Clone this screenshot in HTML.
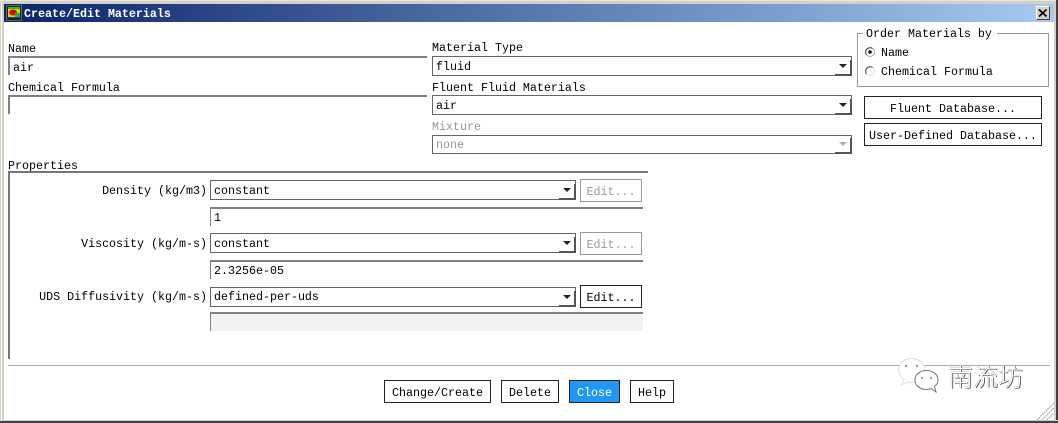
<!DOCTYPE html>
<html><head><meta charset="utf-8"><style>
html,body{margin:0;padding:0;background:#fff}
#w{position:relative;width:1058px;height:423px;overflow:hidden;background:#fff;font:11.67px/14px "Liberation Mono","Noto Sans CJK SC",monospace;color:#000}
#w div,#w svg{position:absolute;box-sizing:border-box}
.t{white-space:pre}
.f{border-top:2px solid #808080;border-left:2px solid #808080}
.s{border:1px solid #666;background:#fff;padding-left:3px;line-height:19px;white-space:pre}
.n{border-right:2px solid #555;border-bottom:2px solid #555;width:17px;height:16px}
.a{width:0;height:0;border-left:4px solid transparent;border-right:4px solid transparent;border-top:4px solid #222}
.b{border:1px solid #222;background:#fff;text-align:center;line-height:24px;white-space:pre}
.g{color:#999;border-color:#999}
</style></head><body><div id="w">
<!-- window frame -->
<div style="left:0;top:0;width:1058px;height:4px;background:#d4d0c8"></div>
<div style="left:0;top:0;width:4px;height:423px;background:#d4d0c8"></div>
<div style="left:1054px;top:0;width:2px;height:423px;background:#d4d0c8"></div>
<div style="left:1056px;top:0;width:2px;height:423px;background:#404040"></div>
<div style="left:0;top:420px;width:1058px;height:1px;background:#d4d0c8"></div>
<div style="left:0;top:421px;width:1058px;height:2px;background:#404040"></div>
<div style="left:0;top:0;width:1056px;height:1px;background:#e8e6e0"></div>
<div style="left:1px;top:1px;width:1px;height:420px;background:#fff"></div>
<!-- title -->
<div style="left:4px;top:4px;width:1050px;height:18px;background:linear-gradient(90deg,#0a246a,#a6caf0)"></div>
<svg style="left:6px;top:5px" width="16" height="16" viewBox="0 0 16 16"><rect width="16" height="16" fill="#666"/><rect x="1" y="1" width="14" height="14" fill="#222"/><rect x="2" y="2" width="12" height="11" fill="#e8d000"/><rect x="2" y="2" width="12" height="2" fill="#20c020"/><ellipse cx="7" cy="7.500" rx="4" ry="3" fill="#d01010"/><rect x="9" y="8" width="5" height="4" fill="#10c030"/><rect x="2" y="12" width="12" height="1" fill="#1040c0"/></svg>
<div class="t" style="left:24px;top:7px;color:#fff;font-weight:bold">Create/Edit Materials</div>
<div style="left:1036px;top:6px;width:14px;height:14px;background:#d4d0c8;border:1px solid;border-color:#fff #404040 #404040 #fff"></div>
<svg style="left:1038px;top:8px" width="10" height="10" viewBox="0 0 10 10"><path d="M1 1.500L8.500 8.500M8.500 1.500L1 8.500" stroke="#000" stroke-width="1.700" fill="none"/></svg>
<!-- left -->
<div class="t" style="left:8px;top:42px">Name</div>
<div class="f" style="left:8px;top:56px;width:419px;height:19px"></div>
<div class="t" style="left:13px;top:61px">air</div>
<div class="t" style="left:8px;top:81px">Chemical Formula</div>
<div class="f" style="left:8px;top:95px;width:419px;height:19px"></div>
<!-- middle -->
<div class="t" style="left:432px;top:41px">Material Type</div>
<div class="s" style="left:432px;top:56px;width:420px;height:20px;line-height:21px">fluid</div>
<div class="n" style="left:835px;top:60px"></div>
<div class="a" style="left:839px;top:64px"></div>
<div class="t" style="left:432px;top:81px">Fluent Fluid Materials</div>
<div class="s" style="left:432px;top:95px;width:420px;height:20px;line-height:21px">air</div>
<div class="n" style="left:835px;top:99px"></div>
<div class="a" style="left:839px;top:103px"></div>
<div class="t" style="left:432px;top:120px;color:#999">Mixture</div>
<div class="s" style="left:432px;top:135px;width:420px;height:19px;color:#999">none</div>
<div class="n" style="left:835px;top:138px"></div>
<div class="a" style="left:839px;top:142px;border-top-color:#aaa"></div>
<!-- order -->
<div style="left:857px;top:33px;width:192px;height:54px;border:1px solid #999"></div>
<div class="t" style="left:863px;top:27px;background:#fff;padding:0 3px;width:134px">Order Materials by</div>
<svg style="left:863px;top:46px" width="14" height="32" viewBox="0 0 14 32"><circle cx="7" cy="6" r="4.500" fill="#fff" stroke="#aaa"/><path d="M3.500 9A4.500 4.500 0 0 1 9.500 2.500" stroke="#444" fill="none"/><circle cx="7" cy="6" r="1.800" fill="#111"/><circle cx="7" cy="25" r="4.500" fill="#fff" stroke="#ddd"/><path d="M3.500 28A4.500 4.500 0 0 1 9.500 21.500" stroke="#444" fill="none"/></svg>
<div class="t" style="left:881px;top:46px">Name</div>
<div class="t" style="left:881px;top:65px">Chemical Formula</div>
<div class="b" style="left:864px;top:96px;width:178px;height:23px">Fluent Database...</div>
<div class="b" style="left:864px;top:123px;width:178px;height:23px">User-Defined Database...</div>
<!-- properties -->
<div class="t" style="left:8px;top:159px">Properties</div>
<div style="left:8px;top:171px;width:640px;height:2px;background:#777"></div>
<div style="left:8px;top:171px;width:2px;height:188px;background:#777"></div>
<div class="t" style="left:0;top:184px;width:207px;text-align:right">Density (kg/m3)</div>
<div class="s" style="left:210px;top:180px;width:366px;height:20px;line-height:20px">constant</div>
<div class="n" style="left:559px;top:184px"></div>
<div class="a" style="left:563px;top:188px"></div>
<div class="b g" style="left:580px;top:179px;width:62px;height:23px">Edit...</div>
<div class="f" style="left:210px;top:207px;width:433px;height:19px;border-left-width:1px"></div>
<div class="t" style="left:214px;top:211px">1</div>
<div class="t" style="left:0;top:237px;width:207px;text-align:right">Viscosity (kg/m-s)</div>
<div class="s" style="left:210px;top:233px;width:366px;height:20px;line-height:20px">constant</div>
<div class="n" style="left:559px;top:237px"></div>
<div class="a" style="left:563px;top:241px"></div>
<div class="b g" style="left:580px;top:232px;width:62px;height:23px">Edit...</div>
<div class="f" style="left:210px;top:260px;width:433px;height:19px;border-left-width:1px"></div>
<div class="t" style="left:214px;top:264px">2.3256e-05</div>
<div class="t" style="left:0;top:290px;width:207px;text-align:right">UDS Diffusivity (kg/m-s)</div>
<div class="s" style="left:210px;top:287px;width:366px;height:20px">defined-per-uds</div>
<div class="n" style="left:559px;top:291px"></div>
<div class="a" style="left:563px;top:295px"></div>
<div class="b" style="left:580px;top:285px;width:62px;height:23px">Edit...</div>
<div class="f" style="left:210px;top:312px;width:433px;height:19px;border-left-width:1px;background:#f2f2f2"></div>
<!-- bottom -->
<div style="left:8px;top:365px;width:1042px;height:1px;background:#aaa"></div>
<div class="b" style="left:384px;top:380px;width:107px;height:23px">Change/Create</div>
<div class="b" style="left:501px;top:380px;width:58px;height:23px">Delete</div>
<div class="b" style="left:569px;top:380px;width:51px;height:23px;background:#2196f3;color:#fff">Close</div>
<div class="b" style="left:630px;top:380px;width:44px;height:23px">Help</div>
<!-- watermark -->
<svg style="left:895px;top:356px" width="46" height="38" viewBox="0 0 46 38"><path d="M16.500 2.500C9 2.500 3.500 8 3.500 14C3.500 18 5.500 21 9 23.500L6 29L13 26C15 26.500 18 26.500 20 26C28 24 30 19 30 14C30 8 24 2.500 16.500 2.500Z" fill="#fff" stroke="#ddd"/><path d="M31.500 14.500C25 14.500 20 18.500 20 24C20 29.500 25 33.500 31.500 33.500C33 33.500 35 33 36 32.500L41 36L39.500 30.500C41.500 29 43 26.500 43 24C43 18.500 38 14.500 31.500 14.500Z" fill="#fff" stroke="#777"/><circle cx="11" cy="10" r="1.200" fill="#999"/><circle cx="22" cy="10" r="1.200" fill="#999"/><circle cx="27" cy="22" r="1" fill="#888"/><circle cx="36" cy="22" r="1" fill="#888"/></svg>
<div class="t" style="left:948px;top:361px;font:25px/30px 'Noto Sans CJK SC',sans-serif;font-weight:300;color:#fff;text-shadow:.7px .7px .3px #333,-.4px -.4px .3px #bbb">南流坊</div>
<svg style="left:1036px;top:403px" width="18" height="17" viewBox="0 0 18 17"><path d="M1 17L18 0M6 17L18 5M11 17L18 10" stroke="#999" stroke-width="1.200" stroke-dasharray="1.500 1" fill="none"/></svg>
</div></body></html>
